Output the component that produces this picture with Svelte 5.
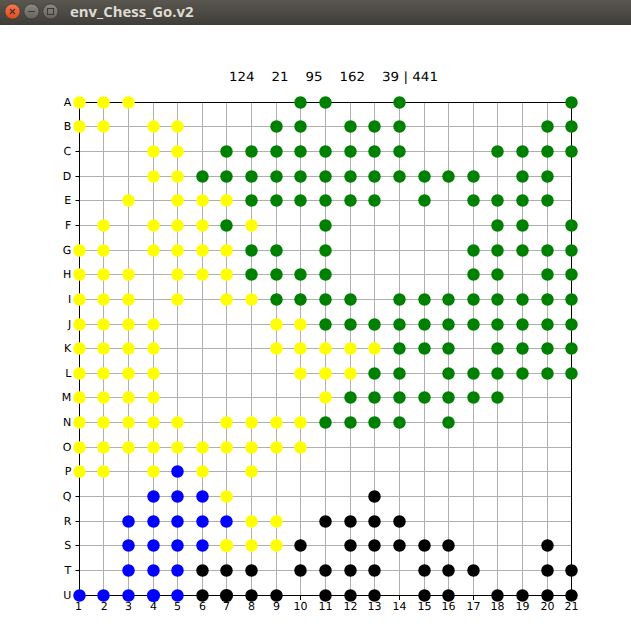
<script>
  const xs = [79, 103, 128, 153, 177, 202, 226, 251, 276, 300, 325, 350, 374, 399, 424, 448, 473, 497, 522, 547, 571].map((v) => v + 0.5);
  const ys = [102, 126, 151, 176, 200, 225, 250, 274, 299, 324, 348, 373, 397, 422, 447, 471, 496, 521, 545, 570, 595].map((v) => v - 24.5);
  const names = 'ABCDEFGHIJKLMNOPQRSTU'.split('');
  const colors = { y: '#ffff00', g: '#008000', b: '#0000ff', k: '#000000' };
  const board = [
    'yyy......gg..g......g',
    'yy.yy...gg.ggg.....gg',
    '...yy.gggggggg...gggg',
    '...yygggggggggggg.gg.',
    '..y.yyygggggg.g.gggg.',
    '.y.yyygy..g......gg.g',
    'yy.yyyygg.g.....ggggg',
    'yyy.yyygggg.....gg.gg',
    'yyy.y.yygggg.gggggggg',
    'yyyy....yyggggggggggg',
    'yyyy....yyyyyggg.gggg',
    'yyyy.....yyygg.gggggg',
    'yyyy......yggggggg...',
    'yyyyy.yyyygggg.g.....',
    'yyyyyyyyyy...........',
    'yy.yby.y.............',
    '...bbby.....k........',
    '..bbbbbyy.kkkk.......',
    '..bbbbyyyk.kkkkk...k.',
    '..bbbkkk.kkkk.kkk..kk',
    'bbbbbkkkk.kkk.kk.kkkk'
  ];
  const repeated = new Set(['18-6', '20-3', '20-6']);
  const stones = board.flatMap((row, r) =>
    row.split('').flatMap((c, i) =>
      c === '.' ? [] : [{ x: xs[i], y: ys[r], fill: colors[c], radius: repeated.has(`${r}-${i}`) ? 6.6 : 6.25 }]
    )
  );
  const counts = [
    { x: 229, w: 25.5, t: '124' },
    { x: 271.5, w: 17, t: '21' },
    { x: 305.5, w: 17, t: '95' },
    { x: 339.5, w: 25.5, t: '162' },
    { x: 382, w: 56, t: '39 | 441' }
  ];
  // The first two column labels sit slightly off their grid lines
  const nudge = [-1, 0.8];
</script>

<div class="window">
  <header>
    <svg class="buttons" width="64" height="25" viewBox="0 0 64 25">
      <defs>
        <linearGradient id="close" x1="0" y1="0" x2="0" y2="1">
          <stop offset="0" stop-color="#f37b54" /><stop offset="1" stop-color="#df4b1c" />
        </linearGradient>
        <linearGradient id="plain" x1="0" y1="0" x2="0" y2="1">
          <stop offset="0" stop-color="#8b8982" /><stop offset="1" stop-color="#64625b" />
        </linearGradient>
      </defs>
      <circle cx="12.5" cy="11.5" r="7.6" fill="url(#close)" stroke="#3c3933" stroke-width=".7" />
      <path d="M10 9l5 5M15 9l-5 5" stroke="#4a2c20" stroke-width="1.1" />
      <circle cx="31.5" cy="11.5" r="7.6" fill="url(#plain)" stroke="#34332e" stroke-width=".7" />
      <path d="M28 11.5h7" stroke="#393832" stroke-width="1" />
      <circle cx="50.5" cy="11.5" r="7.6" fill="url(#plain)" stroke="#34332e" stroke-width=".7" />
      <rect x="47.5" y="8.5" width="6" height="6" fill="none" stroke="#393832" stroke-width="1" />
    </svg>
    <svg class="title" width="140" height="25" viewBox="0 0 140 25">
      <text x="6" y="17" textLength="123.5" lengthAdjust="spacingAndGlyphs">env_Chess_Go.v2</text>
    </svg>
  </header>
  <svg class="plot" width="631" height="609" viewBox="0 0 631 609">
    {#each counts as c}
      <text class="count" x={c.x} y="56" textLength={c.w} lengthAdjust="spacingAndGlyphs">{c.t}</text>
    {/each}
    {#each xs as x}
      <path class="grid" d="M{x} 78V571" />
      <path class="axis" d="M{x} 571V575" />
    {/each}
    {#each ys as y}
      <path class="grid" d="M79 {y}H572" />
      <path class="axis" d="M75.5 {y}H79" />
    {/each}
    <rect class="axis" x="79.5" y="77.5" width="492" height="493" />
    {#each stones as s}
      <circle cx={s.x} cy={s.y} r={s.radius} fill={s.fill} />
    {/each}
    {#each names as n, i}
      <text class="tick" x="71.3" y={ys[i] + 3.5} text-anchor="end">{n}</text>
    {/each}
    {#each xs as x, i}
      <text class="tick" x={x + (nudge[i] ?? 0)} y="585" text-anchor="middle">{i + 1}</text>
    {/each}
  </svg>
</div>

<style>
  :global(body) { margin: 0; background: #fff; overflow: hidden; }
  .window { width: 631px; height: 634px; display: flex; flex-direction: column; background: #fff; }
  header { height: 25px; flex: none; display: flex; background: linear-gradient(#59574f, #3e3d38); }
  svg { display: block; flex: none; }
  .title text { font: bold 13.6px "Open Sans", "Noto Sans", sans-serif; fill: #dfdbd2; }
  .count { font: 12.6px "DejaVu Sans", sans-serif; fill: #000; text-rendering: geometricPrecision; }
  .tick { font: 11px "DejaVu Sans", sans-serif; fill: #000; text-rendering: geometricPrecision; }
  .grid { stroke: #b0b0b0; stroke-width: 1; fill: none; }
  .axis { stroke: #000; stroke-width: 1; fill: none; }
</style>
